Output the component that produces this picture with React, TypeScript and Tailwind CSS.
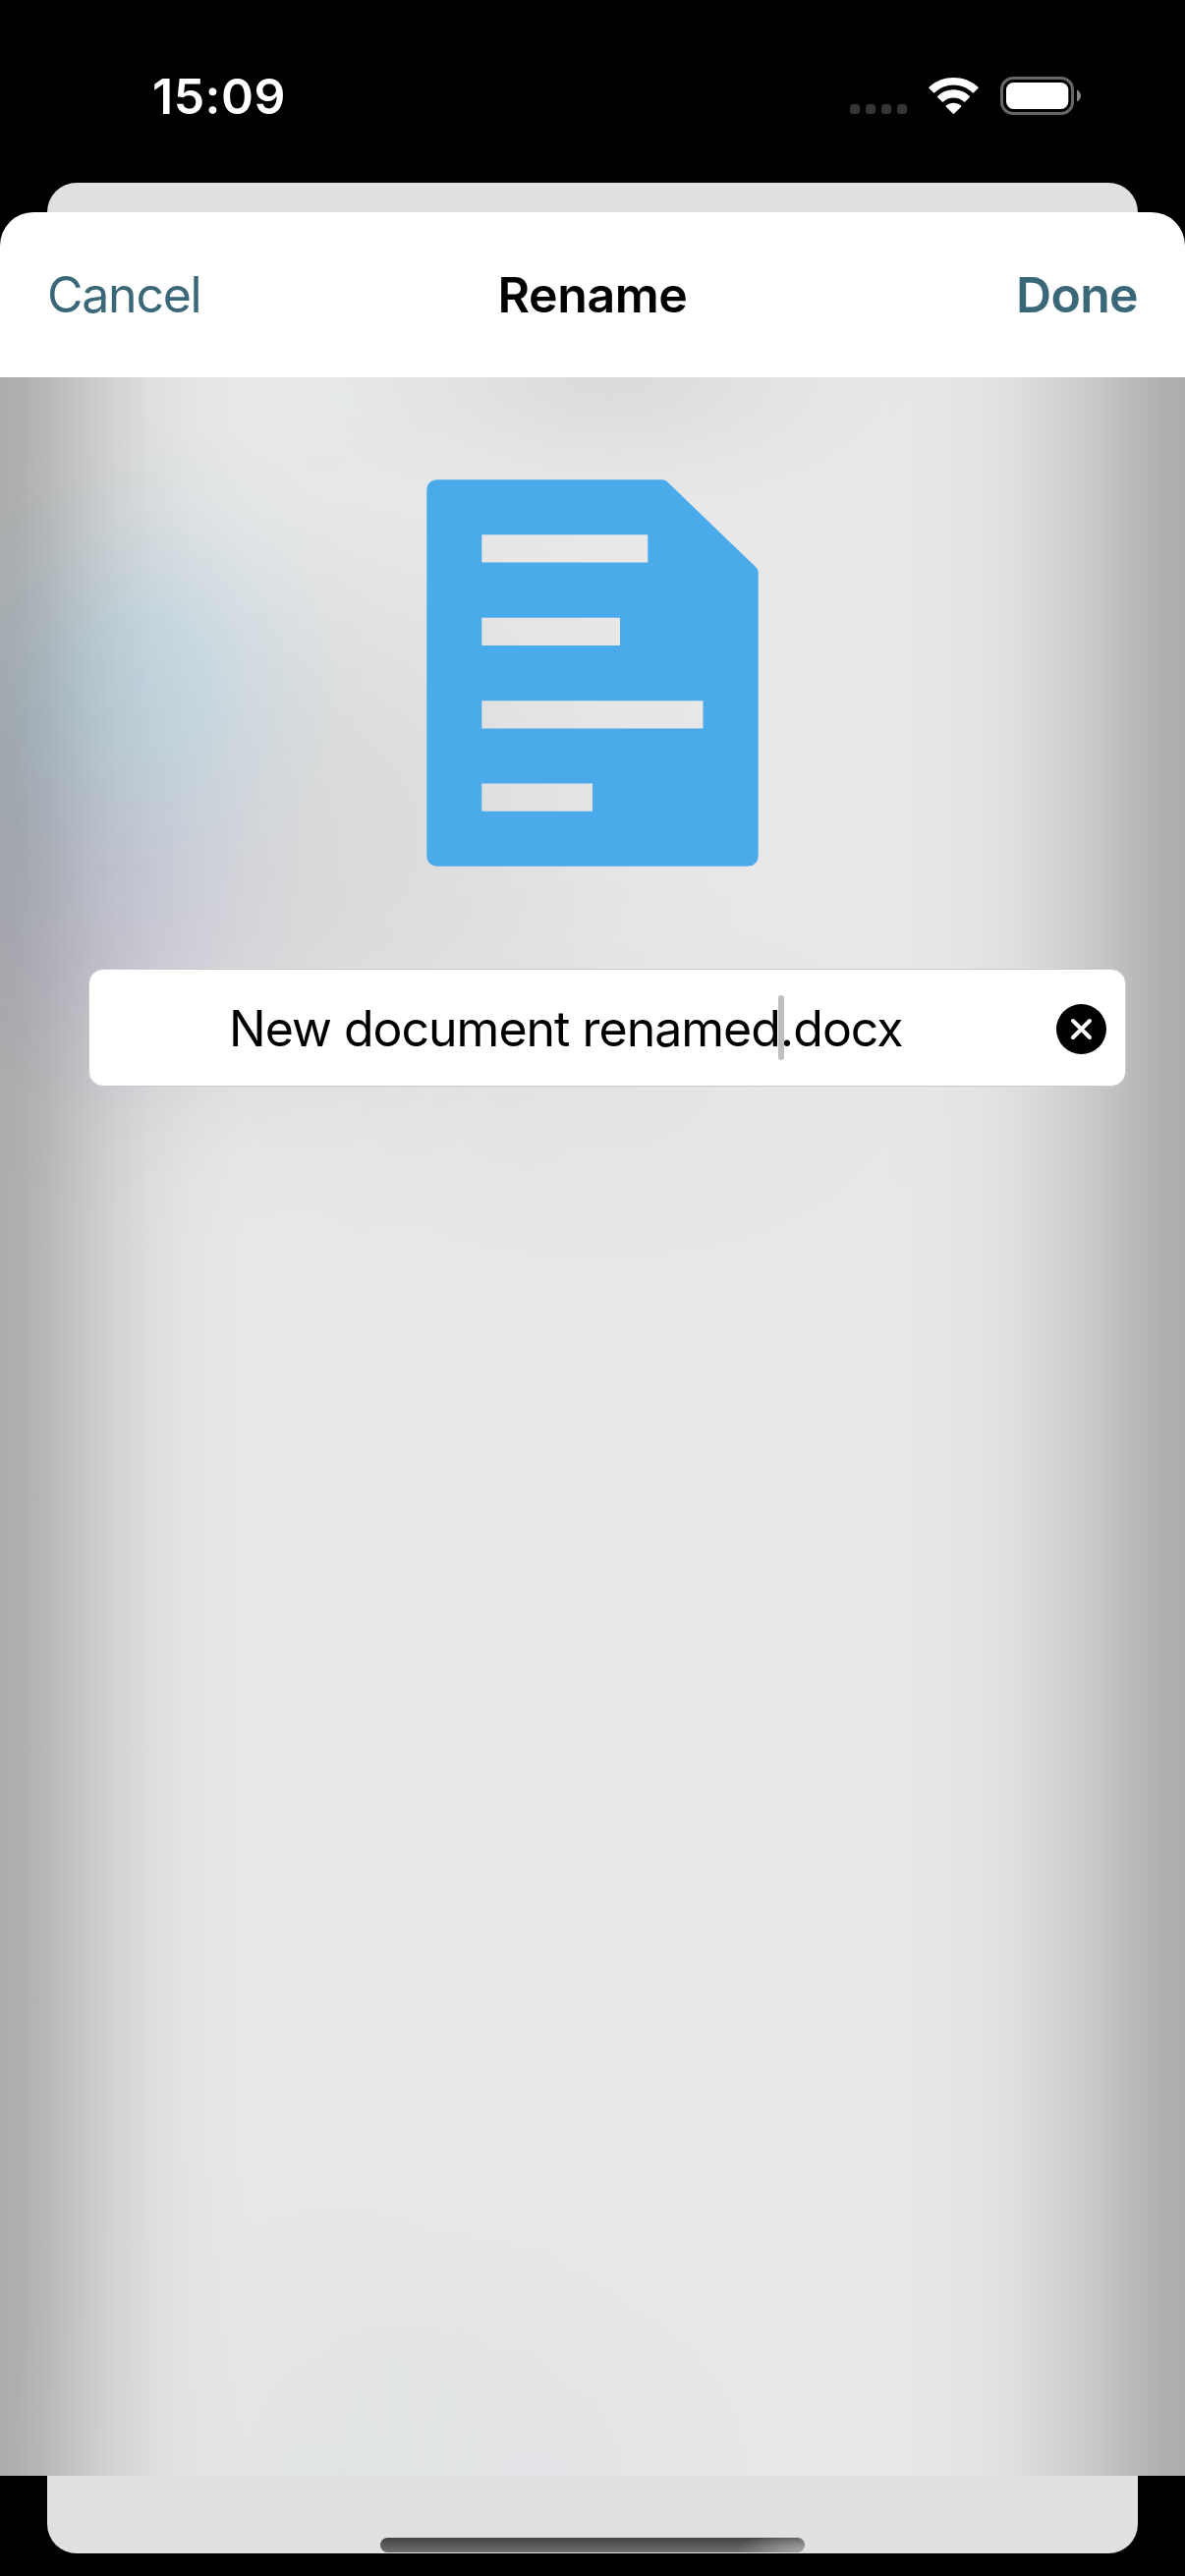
const sheetGlow = [
  'radial-gradient(ellipse 330px 150px at 620px 0px, rgba(0,0,0,.06), rgba(0,0,0,.045) 25%, rgba(0,0,0,.024) 50%, rgba(0,0,0,.007) 75%, transparent)',
  'radial-gradient(ellipse 130px 300px at 0px 400px, rgba(100,140,180,.09), rgba(100,140,180,.075) 25%, rgba(100,140,180,.04) 50%, rgba(100,140,180,.01) 75%, transparent)',
  'radial-gradient(ellipse 250px 270px at 145px 310px, rgba(130,200,235,.26), rgba(130,200,235,.215) 25%, rgba(130,200,235,.12) 50%, rgba(130,200,235,.035) 75%, rgba(130,200,235,0))',
  'radial-gradient(ellipse 250px 270px at 125px 560px, rgba(158,158,210,.22), rgba(158,158,210,.18) 25%, rgba(160,158,208,.105) 50%, rgba(160,158,208,.03) 75%, rgba(160,158,208,0))',
  'radial-gradient(ellipse 520px 440px at 270px 470px, rgba(0,0,0,.062), rgba(0,0,0,.054) 25%, rgba(0,0,0,.03) 50%, rgba(0,0,0,.009) 75%, transparent)',
  'radial-gradient(ellipse 420px 240px at 610px 720px, rgba(0,0,0,.02), rgba(0,0,0,.016) 25%, rgba(0,0,0,.009) 50%, rgba(0,0,0,.003) 75%, transparent)',
  'radial-gradient(ellipse 250px 170px at 350px 20px, rgba(225,236,230,.3), rgba(225,236,230,.12) 50%, rgba(225,236,230,0))',
  'radial-gradient(ellipse 300px 260px at 540px 2136px, rgba(208,214,225,.22), rgba(208,214,225,.1) 50%, rgba(208,214,225,0))',
  'radial-gradient(ellipse 340px 380px at 340px 2136px, rgba(210,218,216,.25), rgba(210,218,216,.12) 50%, rgba(210,218,216,0))',
  'linear-gradient(90deg, #adadad 0, #aeaeae 15px, #b7b7b7 46px, #c5c5c5 80px, #d3d3d3 117px, #dedede 156px, #e4e4e4 195px, #e8e8e8 250px, #e8e8e8 900px, #e6e6e6 955px, #e3e3e3 1000px, #dcdcdc 1045px, #d2d2d2 1080px, #c7c7c7 1117px, #b9b9b9 1155px, #b0b0b0 1185px, #acacac 1206px)',
].join(',');

function StatusBar() {
  return (
    <header className="flex h-[186px] items-start justify-between pl-[155px] pr-[106px] pt-[68px] text-white">
      <time className="text-[50px] leading-[60px] font-semibold tracking-[0.5px]">15:09</time>
      <svg width="236" height="60" viewBox="864 68 236 60" className="block">
        <g fill="#363636">
          <rect x="865" y="106" width="10" height="10" rx="3.5" />
          <rect x="881" y="106" width="10" height="10" rx="3.5" />
          <rect x="897" y="106" width="10" height="10" rx="3.5" />
          <rect x="913" y="106" width="10" height="10" rx="3.5" />
        </g>
        <g fill="#fff">
          <path d="M970.5 86.5c7.3 0 14 2.8 19.1 7.7.4.4 1 .4 1.4 0l4.3-4.2c.5-.5.5-1.200 0-1.600-14-12.600-35.600-12.600-49.600 0-.5.4-.5 1.100 0 1.600l4.300 4.200c.4.4 1 .4 1.400 0 5.100-4.900 11.800-7.700 19.100-7.700Z" />
          <path d="M970.5 99.500c4 0 7.600 1.500 10.300 4 .4.4 1.100.4 1.500 0l4.300-4.200c.5-.5.5-1.200 0-1.600-9.100-8.500-23.100-8.500-32.200 0-.5.4-.5 1.100 0 1.600l4.300 4.200c.4.4 1.100.4 1.500 0 2.700-2.500 6.300-4 10.300-4Z" />
          <path d="M977.900 107.300c.5.4.5 1.100 0 1.600l-6.600 6.600c-.5.5-1.100.5-1.600 0l-6.600-6.600c-.5-.5-.5-1.200 0-1.600 4.200-3.500 10.600-3.500 14.800 0Z" />
          <rect x="1024" y="84" width="63.300" height="27" rx="7.500" />
        </g>
        <rect x="1019.500" y="79.500" width="72" height="36" rx="11.500" fill="none" stroke="#666" strokeWidth="3" />
        <path d="M1096 91.500c2.400 1 4 3.400 4 6s-1.600 5-4 6Z" fill="#888" />
      </svg>
    </header>
  );
}

function DocumentIcon() {
  return (
    <svg width="338" height="394" viewBox="0 0 338 394" className="mx-auto block">
      <path
        fillRule="evenodd"
        fill="#4aaaea"
        d="M12 .3H240Q243 .3 245 2.300L335.500 89.500Q337.700 91.500 337.700 95V382Q337.700 393.700 326 393.700H12Q.3 393.700 .3 382V12Q.3 .3 12 .3ZM56.300 56.300V84.500H225.300V56.300ZM56.300 140.700V169H197V140.700ZM56.300 225.300V253.500H281.500V225.300ZM56.300 309.500V337.700H169V309.500Z"
      />
    </svg>
  );
}

function NameField() {
  return (
    <div className="ml-[90px] mr-[60px] mt-[104px] flex h-[120px] items-center rounded-[15px] border border-[#cbcbcb] bg-white pt-[2px] pr-[19px]">
      <div className="flex-1 pl-[142px] text-[50px] leading-[60px] tracking-[-1px] whitespace-nowrap text-black">
        <span className="relative inline-block">
          New document renamed
          <span className="absolute -right-[4px] -top-[4px] h-[66px] w-[6px] rounded-full bg-[#bfbfbf]" />
        </span>
        <span>.docx</span>
      </div>
      <svg width="51" height="51" viewBox="0 0 51 51" className="block">
        <circle cx="25.500" cy="25.500" r="25.500" fill="#000" />
        <path d="M17 17L34 34M34 17L17 34" stroke="#fff" strokeWidth="4" strokeLinecap="round" />
      </svg>
    </div>
  );
}

export default function App() {
  return (
    <div className="flex h-[2622px] w-[1206px] flex-col overflow-hidden bg-black font-['Inter',sans-serif]">
      <StatusBar />
      <div className="mx-[48px] h-[30px] shrink-0 rounded-t-[30px] bg-[#e0e0e0]" />
      <nav className="grid h-[168px] shrink-0 grid-cols-3 items-center rounded-t-[34px] bg-white px-[48px] text-[50px] leading-[60px]">
        <span className="text-left tracking-[-1.25px] text-[#3b6879]">Cancel</span>
        <span className="text-center font-semibold tracking-[-0.4px] text-black">Rename</span>
        <span className="text-right font-semibold tracking-[-0.7px] text-[#3b6879]">Done</span>
      </nav>
      <main className="h-[2136px] shrink-0 pt-[104px]" style={{ background: sheetGlow }}>
        <DocumentIcon />
        <NameField />
      </main>
      <footer className="mx-[48px] flex h-[79px] shrink-0 items-end justify-center rounded-b-[30px] bg-[#e0e0e0] pb-px">
        <div className="h-[15px] w-[432px] rounded-full bg-[radial-gradient(ellipse_70px_22px_at_100%_100%,#a8a8a8,transparent),linear-gradient(180deg,#444,#6e6e6e)]" />
      </footer>
    </div>
  );
}
